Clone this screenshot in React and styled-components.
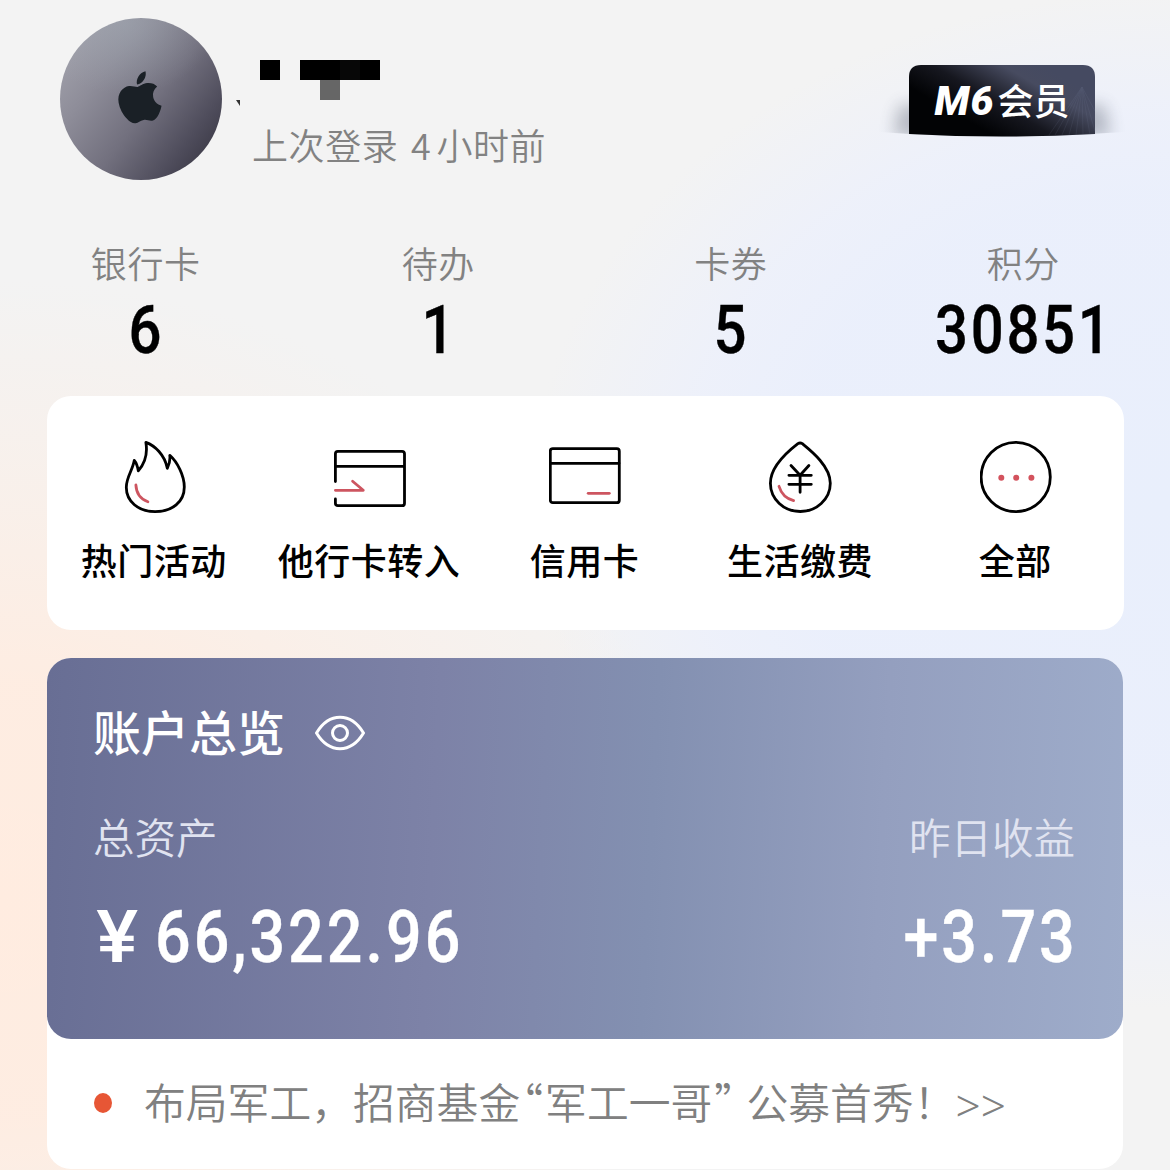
import React from 'react';
import styled, { createGlobalStyle } from 'styled-components';
import { FaApple } from 'react-icons/fa';

const GlobalStyle = createGlobalStyle`
  body {
    margin: 0;
    background: #f3f3f3;
  }

  * {
    box-sizing: border-box;
  }
`;

const Page = styled.div`
  width: 1170px;
  height: 1170px;
  overflow: hidden;

  font-family: 'Noto Sans CJK SC', sans-serif;
  color: #000;

  background:
    radial-gradient(ellipse 700px 620px at 0 900px, #ffece0 0%, rgba(255, 236, 224, 0.9) 35%, rgba(254, 237, 226, 0.5) 65%, rgba(250, 240, 234, 0) 100%),
    radial-gradient(ellipse 640px 510px at 1170px 500px, #e9effc 0%, rgba(234, 239, 252, 0.95) 60%, rgba(236, 240, 252, 0.8) 76%, rgba(240, 242, 249, 0) 100%),
    #f3f3f3;
`;

const Header = styled.header`
  display: flex;
  height: 214px;
  padding: 18px 75px 0 60px;
`;

const Avatar = styled.div`
  display: flex;
  align-items: center;
  justify-content: center;
  flex-shrink: 0;

  width: 162px;
  height: 162px;
  border-radius: 50%;
  background:
    radial-gradient(ellipse 90px 70px at 40% 4%, rgba(160, 168, 178, 0.5), rgba(160, 168, 178, 0)),
    linear-gradient(128deg, #a2a2ac 8%, #8e8d99 30%, #72707e 55%, #4e4c5b 78%, #35333f 95%);

  svg {
    width: 56px;
    height: 57px;
    margin: -4px 4px 0 0;
    color: #1a2026;
    transform: rotate(-9deg);
  }
`;

const User = styled.div`
  flex: 1;
  padding: 42px 0 0 14px;
`;

const MaskedName = styled.svg`
  display: block;
  width: 150px;
  height: 48px;
`;

const LastLogin = styled.div`
  padding-left: 16px;
  font-size: 36px;
  font-weight: 350;
  line-height: 72px;
  letter-spacing: 0.6px;
  color: #828282;
`;

const Hours = styled.span`
  margin: 0 5px 0 4px;
`;

const Member = styled.div`
  position: relative;
  display: flex;
  justify-content: center;

  width: 186px;
  height: 72px;
  margin-top: 47px;
  line-height: 68px;
  color: white;
`;

const MemberShape = styled.svg`
  position: absolute;
  top: 0;
  left: -30px;
  width: 246px;
  height: 80px;
`;

const Level = styled.span`
  position: relative;
  font-family: Roboto, sans-serif;
  font-size: 41px;
  font-style: italic;
  font-weight: 900;
  line-height: 73px;
  letter-spacing: 1px;
`;

const MemberLabel = styled.span`
  position: relative;
  margin-left: 3px;
  font-size: 36px;
  font-weight: 500;
`;

const Stats = styled.section`
  display: grid;
  grid-template-columns: repeat(4, 1fr);
  height: 182px;
  padding-top: 24px;
  text-align: center;
`;

const StatLabel = styled.div`
  padding-right: 1px;
  font-size: 36px;
  font-weight: 350;
  line-height: 48px;
  letter-spacing: 0.6px;
  color: #828282;
`;

const StatValue = styled.div`
  font-family: Roboto, sans-serif;
  font-size: 66px;
  font-weight: 500;
  line-height: 90px;
  letter-spacing: 3px;
  transform: scaleX(0.88);
  -webkit-text-stroke: 0.4px #000;
`;

const Actions = styled.nav`
  display: grid;
  grid-template-columns: repeat(5, 1fr);
  width: 1077px;
  height: 234px;
  margin-left: 47px;
  padding-top: 45px;
  border-radius: 24px;
  background: white;
`;

const Action = styled.a`
  display: flex;
  flex-direction: column;
  align-items: center;

  svg {
    width: 72px;
    height: 72px;
    fill: none;
    stroke: #000;
    stroke-width: 2.8;
    stroke-linecap: round;
    stroke-linejoin: round;
  }

  .accent {
    stroke: #cd5560;
  }

  .dot {
    fill: #d3525d;
    stroke: none;
  }
`;

const ActionLabel = styled.span`
  margin: 22px 2px 0 0;
  font-size: 36px;
  font-weight: 500;
  line-height: 48px;
  letter-spacing: 0.5px;
  white-space: nowrap;
`;

const Account = styled.section`
  width: 1076px;
  height: 511px;
  margin: 28px 0 0 47px;
  border-radius: 24px;
  background: white;
`;

const Overview = styled.div`
  height: 381px;
  padding: 44px 48px 0 46px;
  border-radius: 24px;
  color: white;
  background: linear-gradient(93deg, #686e94 0%, #7d82a7 36%, #8390b1 56%, #949fbf 77%, #9eacca 100%);
`;

const Title = styled.div`
  display: flex;
  align-items: center;
  height: 62px;

  svg {
    width: 50px;
    height: 36px;
    margin-left: 30px;
    fill: none;
    stroke: white;
    stroke-width: 3;
  }
`;

const TitleText = styled.span`
  padding-bottom: 6px;
  font-size: 48px;
  font-weight: 500;
  line-height: 56px;
`;

const Columns = styled.div`
  display: flex;
  justify-content: space-between;
  margin-top: 44px;
`;

const Column = styled.div`
  text-align: ${({ $right }) => ($right ? 'right' : 'left')};
`;

const ColumnLabel = styled.div`
  font-size: 41.5px;
  font-weight: 350;
  line-height: 56px;
  color: #e0e3f0;
`;

const Amount = styled.div`
  margin-top: 30px;
  font-family: Roboto, sans-serif;
  font-size: 73px;
  font-weight: 500;
  line-height: 86px;
  white-space: nowrap;
`;

const Currency = styled.span`
  display: inline-block;
  width: 62px;
  padding-left: 3px;
  transform: scaleX(1.08);
  transform-origin: left;
`;

const Digits = styled.span`
  display: inline-block;
  margin-right: -3px;
  letter-spacing: 3.5px;
  transform: scaleX(0.86);
  transform-origin: ${({ $right }) => ($right ? 'right' : 'left')};
  -webkit-text-stroke: 0.4px white;
`;

const Notice = styled.a`
  display: flex;
  align-items: center;
  height: 124px;
  padding: 0 0 0 47px;
  font-size: 41.8px;
  font-weight: 350;
  color: #808080;
  white-space: pre;
`;

const Bullet = styled.span`
  width: 18px;
  height: 20px;
  margin: 4px 32px 0 0;
  border-radius: 50%;
  background: #e75635;
`;

const Quote = styled.span`
  margin: 0 2px;
  font-feature-settings: 'halt';
`;

const Arrows = styled.span`
  margin-top: 7px;
  font-family: 'Noto Sans', sans-serif;
  font-size: 44px;
`;

const FlameIcon = () => (
  <svg viewBox="0.7 0 72 72">
    <path d="M27.6 1.4C36.5 4.5 46.5 14 49 27.3C51 23.5 52 19 51.5 14.3C59 21 66 34.5 66 46C66 61 54 70.6 36.8 70.6C20 70.6 8 60.5 8 46.3C8 36 14.3 29.5 16 19.3C18.3 22 19.3 25.5 20 29.8C26.5 22.5 29.5 13 27.6 1.4Z" />
    <path className="accent" d="M17.6 44C18 52.5 22 58 29.6 60.8" />
  </svg>
);

const TransferIcon = () => (
  <svg viewBox="0 0 72 72">
    <path d="M1.4 40.5V12.8Q1.4 10.3 3.9 10.3H68Q70.5 10.3 70.5 12.8V62.2Q70.5 64.7 68 64.7H3.9Q1.4 64.7 1.4 62.2V58M1.4 25.3H70.5" />
    <path className="accent" d="M1.4 49.3H29.3L18.6 40.2" />
  </svg>
);

const CardIcon = () => (
  <svg viewBox="0 0 72 72">
    <rect x="1.3" y="7.7" width="69" height="54" rx="2.5" />
    <path d="M1.3 22.3H70" />
    <path className="accent" d="M39.2 52.3H60.3" />
  </svg>
);

const BillIcon = () => (
  <svg viewBox="0.4 0 72 72">
    <path d="M33.3 2.7Q35.5 1.2 37.7 2.7C46 9.5 65.7 25 65.7 42.3C65.7 58.5 51.5 70.5 35.7 70.5C19.5 70.5 5.8 58.5 5.8 42.3C5.8 25 24.5 9.5 33.3 2.7Z" />
    <path d="M26.4 24.5L35.5 34.3L44.3 24.5M24.3 34.3H46.7M24.3 43.3H46.7M35.5 34.3V51.3" />
    <path className="accent" d="M14.4 45.3Q17.8 56.5 29 59.6" />
  </svg>
);

const MoreIcon = () => (
  <svg viewBox="0 0 72 72">
    <circle cx="35.7" cy="36" r="34.6" />
    <circle className="dot" cx="21.3" cy="36.7" r="3" />
    <circle className="dot" cx="36.2" cy="36.7" r="3" />
    <circle className="dot" cx="51.4" cy="36.7" r="3" />
  </svg>
);

const stats = [
  { label: '银行卡', value: '6' },
  { label: '待办', value: '1' },
  { label: '卡券', value: '5' },
  { label: '积分', value: '30851' },
];

const actions = [
  { label: '热门活动', Icon: FlameIcon },
  { label: '他行卡转入', Icon: TransferIcon },
  { label: '信用卡', Icon: CardIcon },
  { label: '生活缴费', Icon: BillIcon },
  { label: '全部', Icon: MoreIcon },
];

export default () => (
  <Page>
    <GlobalStyle />
    <Header>
      <Avatar>
        <FaApple />
      </Avatar>
      <User>
        <MaskedName viewBox="0 0 150 48">
          <path d="M0 40H4V46Z" fill="#333" />
          <path d="M24 0H44V20H24ZM64 0H144V20H64Z" />
          <path d="M104 0H124V20H104Z" fill="#070707" />
          <path d="M84 20H104V40H84Z" fill="#666" />
        </MaskedName>
        <LastLogin>
          上次登录 <Hours>4</Hours>小时前
        </LastLogin>
      </User>
      <Member>
        <MemberShape viewBox="0 0 246 80">
          <defs>
            <linearGradient id="badge" x1="0.1" y1="0.7" x2="0.85" y2="0.2">
              <stop offset="0.15" stopColor="#020305" />
              <stop offset="0.45" stopColor="#16171f" />
              <stop offset="0.8" stopColor="#474b60" />
              <stop offset="1" stopColor="#454a61" />
            </linearGradient>
            <filter id="soft" x="-50%" y="-50%" width="200%" height="200%">
              <feGaussianBlur stdDeviation="8" />
            </filter>
            <clipPath id="floor">
              <path d="M0 0H246V67Q123 76 0 67Z" />
            </clipPath>
          </defs>
          <g clipPath="url(#floor)">
            <path d="M20 40H226L232 72H14Z" fill="#39404f" opacity="0.3" filter="url(#soft)" />
          </g>
          <path d="M30 12Q30 0 42 0H204Q216 0 216 12V69Q123 74 30 69Z" fill="url(#badge)" />
          <path
            d="M203 22L170 70M203 22L176 70M203 22L183 70M203 22L190 70M203 22L197 70M203 22L204 70M203 22L211 70M203 22L216 66M203 22L216 46"
            stroke="#8189a6"
            strokeWidth="0.6"
            opacity="0.2"
          />
        </MemberShape>
        <Level>M6</Level>
        <MemberLabel>会员</MemberLabel>
      </Member>
    </Header>

    <Stats>
      {stats.map(({ label, value }) => (
        <div key={label}>
          <StatLabel>{label}</StatLabel>
          <StatValue>{value}</StatValue>
        </div>
      ))}
    </Stats>

    <Actions>
      {actions.map(({ label, Icon }) => (
        <Action key={label}>
          <Icon />
          <ActionLabel>{label}</ActionLabel>
        </Action>
      ))}
    </Actions>

    <Account>
      <Overview>
        <Title>
          <TitleText>账户总览</TitleText>
          <svg viewBox="0 0 50 36">
            <path d="M1.5 18Q11 2.3 25 2.3T48.5 18Q39 33.7 25 33.7T1.5 18Z" strokeLinejoin="round" />
            <circle cx="25" cy="18" r="7.5" />
          </svg>
        </Title>
        <Columns>
          <Column>
            <ColumnLabel>总资产</ColumnLabel>
            <Amount>
              <Currency>¥</Currency>
              <Digits>66,322.96</Digits>
            </Amount>
          </Column>
          <Column $right>
            <ColumnLabel>昨日收益</ColumnLabel>
            <Amount>
              <Digits $right>+3.73</Digits>
            </Amount>
          </Column>
        </Columns>
      </Overview>
      <Notice>
        <Bullet />
        布局军工，招商基金<Quote>“</Quote>军工一哥<Quote>” </Quote>公募首秀！<Arrows>&gt;&gt;</Arrows>
      </Notice>
    </Account>
  </Page>
);
